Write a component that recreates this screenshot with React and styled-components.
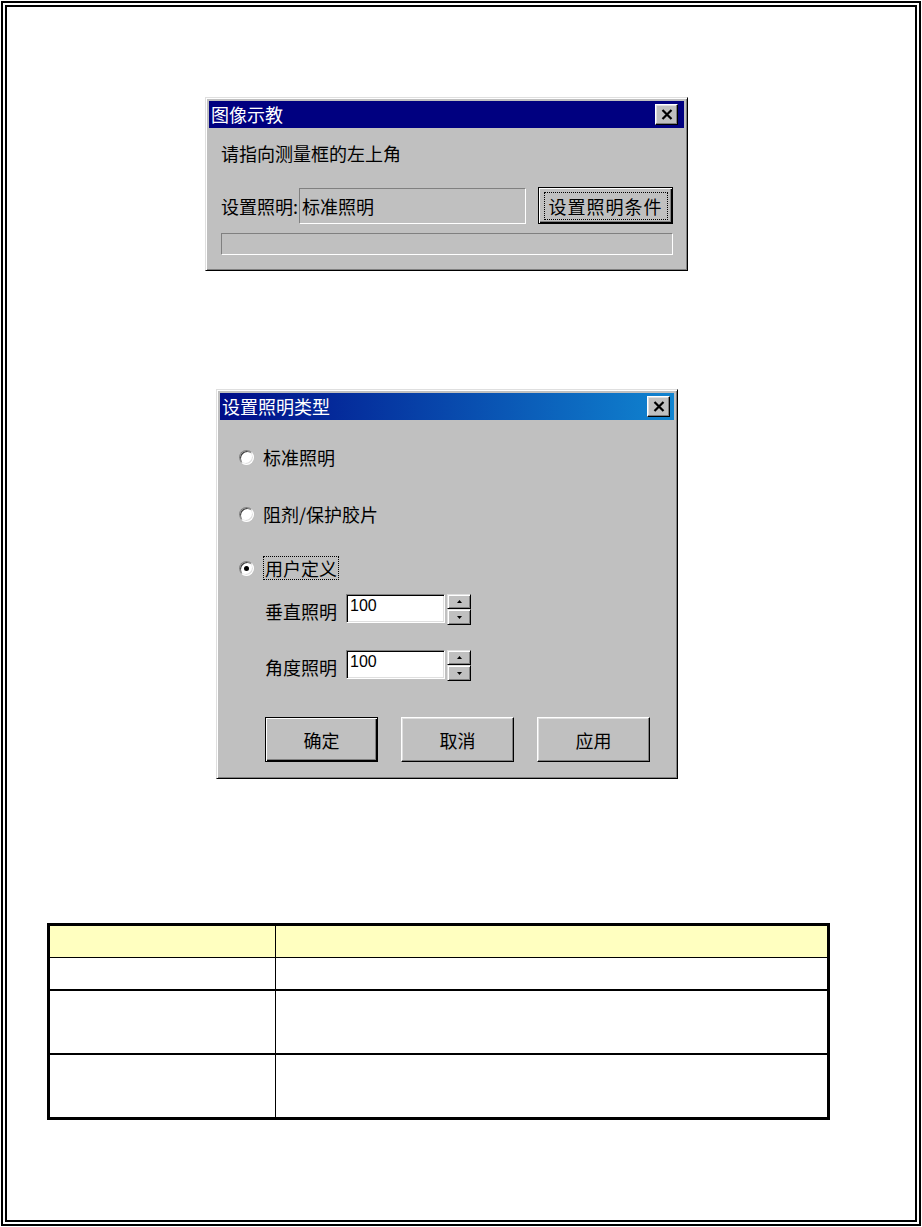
import { styled, createGlobalStyle } from "styled-components";

const GlobalStyle = createGlobalStyle`
    * { box-sizing: border-box; }
    body {
        margin: 0;
        background: #fff;
        font-family: "Noto Sans CJK SC", "Noto Sans", sans-serif;
    }
`;

function CloseButton({ $mr }) {
    return (
        <CloseBtn $mr={$mr}>
            <svg width="12" height="11" viewBox="0 0 12 11">
                <path d="M1.5 1 L10.5 10 M10.5 1 L1.5 10" stroke="#000" strokeWidth="2.2" fill="none" />
            </svg>
        </CloseBtn>
    );
}

function Radio({ checked, children, focused, $mt }) {
    return (
        <RadioRow $mt={$mt}>
            <RadioDot $checked={checked} />
            {focused ? <FocusRect>{children}</FocusRect> : <span>{children}</span>}
        </RadioRow>
    );
}

function Spinner({ label, value, $mt }) {
    return (
        <SpinRow $mt={$mt}>
            <SpinLabel>{label}</SpinLabel>
            <SpinInput>{value}</SpinInput>
            <SpinButtons>
                <SpinArrow $h={15}>
                    <svg width="5" height="3" viewBox="0 0 5 3"><path d="M2.5 0 L5 3 L0 3 Z" fill="#000" /></svg>
                </SpinArrow>
                <SpinArrow $h={16}>
                    <svg width="5" height="3" viewBox="0 0 5 3"><path d="M0 0 L5 0 L2.5 3 Z" fill="#000" /></svg>
                </SpinArrow>
            </SpinButtons>
        </SpinRow>
    );
}

export default function App() {
    return (
        <>
            <GlobalStyle />
            <Page>
                <Window $w={483} $ml={198} $mt={90}>
                    <TitleBar>
                        <TitleText>图像示教</TitleText>
                        <CloseButton $mr={6} />
                    </TitleBar>
                    <TeachBody>
                        <Message>请指向测量框的左上角</Message>
                        <LightRow>
                            <RowLabel>设置照明:</RowLabel>
                            <StaticField>标准照明</StaticField>
                            <Button $w={135} $h={37} $default>
                                <FocusRect $spaced>设置照明条件</FocusRect>
                            </Button>
                        </LightRow>
                        <Progress />
                    </TeachBody>
                </Window>

                <Window $w={462} $ml={209} $mt={118}>
                    <TitleBar $gradient>
                        <TitleText>设置照明类型</TitleText>
                        <CloseButton $mr={4} />
                    </TitleBar>
                    <TypeBody>
                        <Radio $mt={0}>标准照明</Radio>
                        <Radio $mt={33}>阻剂/保护胶片</Radio>
                        <Radio $mt={30} checked focused>用户定义</Radio>
                        <Spinner $mt={14} label="垂直照明" value="100" />
                        <Spinner $mt={25} label="角度照明" value="100" />
                        <ButtonBar>
                            <Button $w={113} $h={45} $default>确定</Button>
                            <Button $w={113} $h={45}>取消</Button>
                            <Button $w={113} $h={45}>应用</Button>
                        </ButtonBar>
                    </TypeBody>
                </Window>

                <Table>
                    <Cell $header $h={32} $right />
                    <Cell $header $h={32} />
                    <Cell $h={33} $thick $right />
                    <Cell $h={33} $thick />
                    <Cell $h={64} $thick $right />
                    <Cell $h={64} $thick />
                    <Cell $h={62} $last $right />
                    <Cell $h={62} $last />
                </Table>
            </Page>
        </>
    );
}

const Page = styled.div`
    margin: 1px;
    width: 920px;
    height: 1225px;
    border: 6px double #000;
    display: flex;
    flex-direction: column;
    align-items: flex-start;
`;

const Window = styled.div`
    width: ${(p) => p.$w}px;
    margin: ${(p) => p.$mt}px 0 0 ${(p) => p.$ml}px;
    padding: 3px;
    background: #c0c0c0;
    border: 1px solid;
    border-color: #dfdfdf #000 #000 #dfdfdf;
    box-shadow: inset 1px 1px #fff, inset -1px -1px #808080;
    font-size: 18px;
    color: #000;
`;

const TitleBar = styled.div`
    height: 27px;
    display: flex;
    align-items: center;
    justify-content: space-between;
    padding-left: 2px;
    background: ${(p) => (p.$gradient ? "linear-gradient(to right, #000c88, #1084d0)" : "#000080")};
`;

const TitleText = styled.span`
    color: #fff;
    font-size: 18px;
    line-height: 27px;
`;

const CloseBtn = styled.div`
    width: 23px;
    height: 21px;
    margin-right: ${(p) => p.$mr}px;
    display: flex;
    align-items: center;
    justify-content: center;
    background: #c0c0c0;
    border: 1px solid;
    border-color: #fff #000 #000 #fff;
    box-shadow: inset -1px -1px #808080, inset 1px 1px #dfdfdf;
`;

const TeachBody = styled.div`
    padding: 14px 11px 12px 12px;
    display: flex;
    flex-direction: column;
`;

const Message = styled.div`
    height: 22px;
    line-height: 22px;
    margin-bottom: 23px;
`;

const LightRow = styled.div`
    height: 37px;
    display: flex;
    align-items: center;
`;

const RowLabel = styled.span`
    width: 78px;
    white-space: nowrap;
`;

const StaticField = styled.div`
    flex: 1;
    height: 36px;
    margin-right: 12px;
    display: flex;
    align-items: center;
    padding-left: 2px;
    border: 1px solid;
    border-color: #808080 #fff #fff #808080;
`;

const Button = styled.div`
    width: ${(p) => p.$w}px;
    height: ${(p) => p.$h}px;
    flex: none;
    display: flex;
    align-items: center;
    justify-content: center;
    background: #c0c0c0;
    border: 1px solid;
    border-color: ${(p) => (p.$default ? "#000" : "#fff #000 #000 #fff")};
    box-shadow: ${(p) =>
        p.$default
            ? "inset 1px 1px #fff, inset -1px -1px #000, inset -2px -2px #808080"
            : "inset -1px -1px #808080, inset 1px 1px #dfdfdf"};
    font-size: 18px;
`;

const FocusRect = styled.span`
    border: 1px dotted #000;
    padding: ${(p) => (p.$spaced ? "2px 4px" : "0 1px")};
    letter-spacing: ${(p) => (p.$spaced ? "1px" : "0")};
    line-height: 22px;
`;

const Progress = styled.div`
    height: 22px;
    margin-top: 9px;
    border: 1px solid;
    border-color: #808080 #fff #fff #808080;
`;

const TypeBody = styled.div`
    padding: 25px 0 13px 19px;
    display: flex;
    flex-direction: column;
`;

const RadioRow = styled.div`
    height: 24px;
    margin-top: ${(p) => p.$mt}px;
    display: flex;
    align-items: center;
    gap: 9px;
    line-height: 22px;
`;

const RadioDot = styled.div`
    width: 15px;
    height: 15px;
    flex: none;
    border-radius: 50%;
    background: #fff;
    border: 1px solid;
    border-color: #808080 #fff #fff #808080;
    box-shadow: inset 1px 1px #404040, inset -1px -1px #dfdfdf;
    display: flex;
    align-items: center;
    justify-content: center;

    &::after {
        content: "";
        width: 5px;
        height: 5px;
        border-radius: 50%;
        background: #000;
        display: ${(p) => (p.$checked ? "block" : "none")};
    }
`;

const SpinRow = styled.div`
    height: 31px;
    margin-top: ${(p) => p.$mt}px;
    margin-left: 26px;
    display: flex;
    align-items: flex-start;
`;

const SpinLabel = styled.span`
    width: 81px;
    line-height: 22px;
    margin-top: 6px;
`;

const SpinInput = styled.div`
    width: 99px;
    height: 29px;
    background: #fff;
    border: 1px solid;
    border-color: #808080 #fff #fff #808080;
    box-shadow: inset 1px 1px #000, inset -1px -1px #dfdfdf;
    padding: 1px 0 0 3px;
    font-family: "Liberation Sans", Arial, sans-serif;
    font-size: 16px;
    line-height: 20px;
`;

const SpinButtons = styled.div`
    margin-left: 2px;
    display: flex;
    flex-direction: column;
`;

const SpinArrow = styled.div`
    width: 24px;
    height: ${(p) => p.$h}px;
    display: flex;
    align-items: center;
    justify-content: center;
    background: #c0c0c0;
    border: 1px solid;
    border-color: #dfdfdf #000 #000 #dfdfdf;
    box-shadow: inset 1px 1px #fff, inset -1px -1px #808080;
`;

const ButtonBar = styled.div`
    margin: 36px 0 0 26px;
    display: flex;
    gap: 23px;
`;

const Table = styled.div`
    width: 783px;
    margin: 144px 0 0 40px;
    border: 3px solid #000;
    display: grid;
    grid-template-columns: 226px 1fr;
`;

const Cell = styled.div`
    height: ${(p) => p.$h}px;
    background: ${(p) => (p.$header ? "#ffffc0" : "#fff")};
    border-right: ${(p) => (p.$right ? "1px solid #000" : "none")};
    border-bottom: ${(p) => (p.$last ? "none" : p.$thick ? "2px solid #000" : "1px solid #000")};
`;
